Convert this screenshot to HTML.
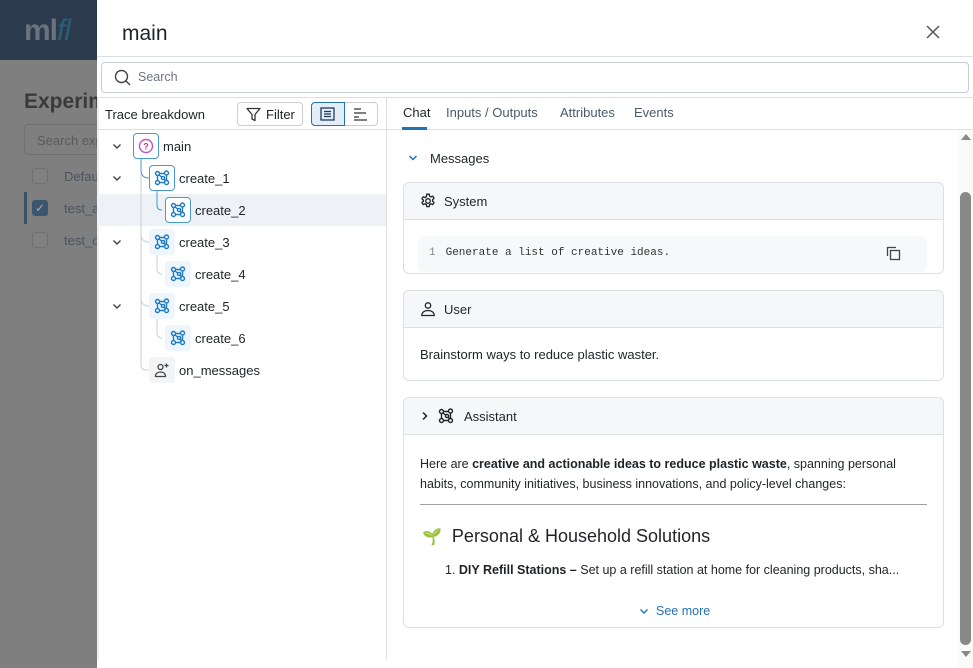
<!DOCTYPE html>
<html><head><meta charset="utf-8"><style>
*{box-sizing:border-box;margin:0;padding:0}
body{width:973px;height:668px;overflow:hidden;font-family:"Liberation Sans","DejaVu Sans",sans-serif;background:#7f7f7f;position:relative;color:#1f2328}
.a{position:absolute}
.bg-hdr{left:0;top:0;width:97px;height:60px;background:#2c3a4d}
.drawer{left:97px;top:0;width:876px;height:668px;background:#fff}
.t{font-size:13px;color:#1f2328;white-space:nowrap}
.ic{position:absolute;width:26px;height:26px;border-radius:4px;display:flex;align-items:center;justify-content:center;background:#eef5fb}
.ic.b{border:1px solid #4a98d2;background:#fff}
.card{position:absolute;left:403px;width:541px;border:1px solid #dcdfe3;border-radius:6px;overflow:hidden;background:#fff}
.ch{height:37px;background:#f6f7f9;border-bottom:1px solid #dcdfe3;display:flex;align-items:center;padding-left:16px;font-size:13px;gap:8px}
.cv{position:absolute}
</style></head><body>
<div class="a bg-hdr"></div>
<div class="a" style="left:24px;top:14px;font-size:30px;font-weight:bold;color:#6a727c;letter-spacing:-1px">ml<span style="color:#2b5e74;font-style:italic;font-weight:normal">fl</span></div>
<div class="a" style="left:24px;top:90px;font-size:21px;color:#3a3a3a;font-weight:bold">Experim</div>
<div class="a" style="left:24px;top:124px;width:90px;height:31px;border:1px solid #707070;border-radius:4px;font-size:13px;color:#5a5a5a;padding:8px 12px;white-space:nowrap;overflow:hidden">Search exp</div>
<div class="a" style="left:32px;top:168px;width:16px;height:16px;border:1px solid #707070;border-radius:3px"></div>
<div class="a" style="left:64px;top:169px;font-size:13px;color:#4a5560">Defau</div>
<div class="a" style="left:24px;top:192px;width:3px;height:32px;background:#3c526b"></div>
<div class="a" style="left:32px;top:200px;width:16px;height:16px;background:#3d5670;border-radius:3px;color:#aaa;font-size:12px;text-align:center;line-height:16px">✓</div>
<div class="a" style="left:64px;top:201px;font-size:13px;color:#4a5560">test_a</div>
<div class="a" style="left:32px;top:232px;width:16px;height:16px;border:1px solid #707070;border-radius:3px"></div>
<div class="a" style="left:64px;top:233px;font-size:13px;color:#4a5560">test_o</div>

<div class="a drawer"></div>
<div class="a" style="left:122px;top:22px;font-size:21px;color:#1f2328">main</div>
<svg class="a" style="left:926px;top:25px" width="14" height="14" viewBox="0 0 14 14"><path d="M1 1L13 13M13 1L1 13" stroke="#555" stroke-width="1.5"/></svg>
<div class="a" style="left:97px;top:56px;width:876px;height:1px;background:#dcdfe3"></div>
<div class="a" style="left:101px;top:62px;width:868px;height:31px;border:1px solid #c9ced4;border-radius:4px"></div>
<svg class="a" style="left:114px;top:69px" width="17" height="17" viewBox="0 0 17 17"><circle cx="7.5" cy="7.5" r="6" fill="none" stroke="#444" stroke-width="1.4"/><path d="M12 12l4 4" stroke="#444" stroke-width="1.4"/></svg>
<div class="a t" style="left:138px;top:70px;color:#6b7580;font-size:12.5px">Search</div>
<div class="a" style="left:97px;top:97px;width:876px;height:1px;background:#dcdfe3"></div>
<div class="a" style="left:97px;top:97px;width:2px;height:563px;background:#eee"></div>
<div class="a" style="left:386px;top:97px;width:1px;height:563px;background:#dcdfe3"></div>

<div class="a t" style="left:105px;top:107px">Trace breakdown</div>
<div class="a" style="left:237px;top:102px;width:66px;height:24px;border:1px solid #c9ced4;border-radius:4px"></div>
<svg class="a" style="left:246px;top:107px" width="15" height="15" viewBox="0 0 15 15"><path d="M1 1.5h13L9 7.5v6l-3-1.5V7.5z" fill="none" stroke="#333" stroke-width="1.3" stroke-linejoin="round"/></svg>
<div class="a t" style="left:266px;top:107px">Filter</div>
<div class="a" style="left:311px;top:102px;width:67px;height:24px;border:1px solid #c9ced4;border-radius:4px"></div>
<div class="a" style="left:311px;top:102px;width:34px;height:24px;border:1px solid #2272b4;background:#e3eef8;border-radius:4px 0 0 4px"></div>
<svg class="a" style="left:320px;top:107px" width="15" height="14" viewBox="0 0 15 14"><rect x="1" y="1" width="13" height="12" fill="none" stroke="#1f3b57" stroke-width="1.3"/><path d="M4 4.5h7M4 7h7M4 9.5h7" stroke="#1f3b57" stroke-width="1.2"/></svg>
<svg class="a" style="left:353px;top:107px" width="15" height="14" viewBox="0 0 15 14"><path d="M1 2h7M1 6h12M1 10h5M1 13h13" stroke="#333" stroke-width="1.3"/></svg>
<div class="a" style="left:97px;top:129px;width:289px;height:1px;background:#dcdfe3"></div>
<div class="a" style="left:97px;top:194px;width:289px;height:32px;background:#eef2f7"></div>

<svg class="a" style="left:97px;top:130px" width="289" height="260" viewBox="97 130 289 260" fill="none" stroke="#c9ced4" stroke-width="1">
<path d="M141 159V365q0 5 5 5h4"/>
<path d="M141 170q0 8 8 8"/>
<path d="M157 190v15q0 5 5 5"/>
<path d="M141 234q0 8 8 8"/>
<path d="M157 254v15q0 5 5 5"/>
<path d="M141 298q0 8 8 8"/>
<path d="M157 318v15q0 5 5 5"/>
</svg>
<svg class="a" style="left:97px;top:130px" width="100" height="100" viewBox="97 130 100 100" fill="none" stroke="#4a98d2" stroke-width="1">
<path d="M141 159v11q0 8 8 8"/><path d="M157 191v14q0 5 5 5"/>
</svg>

<svg class="cv" style="left:112px;top:143px" width="10" height="7" viewBox="0 0 10 7"><path d="M1.5 1.5L5 5l3.5-3.5" stroke="#444" stroke-width="1.4" fill="none"/></svg>
<svg class="cv" style="left:112px;top:175px" width="10" height="7" viewBox="0 0 10 7"><path d="M1.5 1.5L5 5l3.5-3.5" stroke="#444" stroke-width="1.4" fill="none"/></svg>
<svg class="cv" style="left:112px;top:239px" width="10" height="7" viewBox="0 0 10 7"><path d="M1.5 1.5L5 5l3.5-3.5" stroke="#444" stroke-width="1.4" fill="none"/></svg>
<svg class="cv" style="left:112px;top:303px" width="10" height="7" viewBox="0 0 10 7"><path d="M1.5 1.5L5 5l3.5-3.5" stroke="#444" stroke-width="1.4" fill="none"/></svg>

<div class="ic b" style="left:133px;top:133px"><svg width="16" height="16" viewBox="0 0 16 16"><circle cx="8" cy="8" r="6.5" fill="none" stroke="#c354c8" stroke-width="1.4"/><text x="8" y="11.5" font-size="9" text-anchor="middle" fill="#c03c7a" font-family="Liberation Sans" font-weight="bold">?</text></svg></div>
<div class="a t" style="left:163px;top:139px">main</div>

<svg width="0" height="0" style="position:absolute"><defs><g id="n" fill="none" stroke-width="1.4"><circle cx="3.5" cy="3.5" r="2"/><circle cx="12.5" cy="3" r="2"/><circle cx="3.5" cy="12.5" r="2"/><circle cx="12.5" cy="12.5" r="2"/><circle cx="9" cy="8" r="1.6"/><path d="M5.5 3.5h5M3.5 5.5v5M5.5 12.5h5M12.5 5v5.5M5 5l2.7 2M10.3 9l1 2"/></g></defs></svg>
<div class="ic b" style="left:149px;top:165px"><svg width="16" height="16" stroke="#1e7ac0"><use href="#n"/></svg></div>
<div class="a t" style="left:179px;top:171px">create_1</div>
<div class="ic b" style="left:165px;top:197px"><svg width="16" height="16" stroke="#1e7ac0"><use href="#n"/></svg></div>
<div class="a t" style="left:195px;top:203px">create_2</div>
<div class="ic" style="left:149px;top:229px"><svg width="16" height="16" stroke="#1e7ac0"><use href="#n"/></svg></div>
<div class="a t" style="left:179px;top:235px">create_3</div>
<div class="ic" style="left:165px;top:261px"><svg width="16" height="16" stroke="#1e7ac0"><use href="#n"/></svg></div>
<div class="a t" style="left:195px;top:267px">create_4</div>
<div class="ic" style="left:149px;top:293px"><svg width="16" height="16" stroke="#1e7ac0"><use href="#n"/></svg></div>
<div class="a t" style="left:179px;top:299px">create_5</div>
<div class="ic" style="left:165px;top:325px"><svg width="16" height="16" stroke="#1e7ac0"><use href="#n"/></svg></div>
<div class="a t" style="left:195px;top:331px">create_6</div>
<div class="ic" style="left:149px;top:357px;background:#f3f4f6"><svg width="16" height="16" viewBox="0 0 16 16" fill="none" stroke="#444" stroke-width="1.3"><circle cx="6.5" cy="5" r="2.5"/><path d="M1.5 14.5c0-3 2.2-4.5 5-4.5s5 1.5 5 4.5z"/><path d="M12.5 1.5v4M10.5 3.5h4"/></svg></div>
<div class="a t" style="left:179px;top:363px">on_messages</div>

<div class="a t" style="left:403px;top:105px">Chat</div>
<div class="a t" style="left:446px;top:105px;color:#4a5a6a">Inputs / Outputs</div>
<div class="a t" style="left:560px;top:105px;color:#4a5a6a">Attributes</div>
<div class="a t" style="left:634px;top:105px;color:#4a5a6a">Events</div>
<div class="a" style="left:387px;top:129px;width:586px;height:1px;background:#dcdfe3"></div>
<div class="a" style="left:402px;top:127px;width:25px;height:3px;background:#2272b4"></div>

<div class="a" style="left:958px;top:130px;width:15px;height:538px;background:#fafafa"></div>
<div class="a" style="left:961px;top:134px;width:0;height:0;border-left:5px solid transparent;border-right:5px solid transparent;border-bottom:6px solid #888"></div>
<div class="a" style="left:960px;top:192px;width:11px;height:453px;background:#888;border-radius:6px"></div>
<div class="a" style="left:961px;top:651px;width:0;height:0;border-left:5px solid transparent;border-right:5px solid transparent;border-top:6px solid #888"></div>

<svg class="a" style="left:408px;top:154px" width="10" height="8" viewBox="0 0 10 8"><path d="M1.5 2l3.5 3.5L8.5 2" stroke="#2272b4" stroke-width="1.5" fill="none"/></svg>
<div class="a t" style="left:430px;top:151px">Messages</div>

<div class="card" style="top:182px;height:92px">
<div class="ch"><svg width="16" height="16" viewBox="0 0 16 16" fill="none" stroke="#222" stroke-width="1.3"><circle cx="8" cy="8" r="2.3"/><path d="M6.8 1.2h2.4l.4 1.9 1.4.8 1.8-.7 1.2 2.1-1.4 1.3v1.6l1.4 1.3-1.2 2.1-1.8-.7-1.4.8-.4 1.9H6.8l-.4-1.9-1.4-.8-1.8.7-1.2-2.1 1.4-1.3V7.2L2 5.9l1.2-2.1 1.8.7 1.4-.8z"/></svg><span>System</span></div>
<div class="a" style="left:14px;top:53px;width:509px;height:36px;background:#f7f8f9;border-radius:6px"></div>
<div class="a" style="left:25px;top:64px;font-family:'Liberation Mono',monospace;font-size:11px;color:#333;white-space:nowrap"><span style="color:#888;margin-right:10px">1</span>Generate a list of creative ideas.</div>
<svg class="a" style="left:482px;top:63px" width="15" height="15" viewBox="0 0 15 15" fill="none" stroke="#444" stroke-width="1.3"><path d="M1.5 10V1.5H10"/><rect x="4.5" y="4.5" width="9" height="9"/></svg>
</div>

<div class="card" style="top:290px;height:91px">
<div class="ch"><svg width="16" height="16" viewBox="0 0 16 16" fill="none" stroke="#222" stroke-width="1.3"><circle cx="8" cy="4.5" r="2.7"/><path d="M1.8 14.5c0-3.3 2.8-5 6.2-5s6.2 1.7 6.2 5z"/></svg><span>User</span></div>
<div class="a t" style="left:16px;top:56px">Brainstorm ways to reduce plastic waster.</div>
</div>

<div class="card" style="top:397px;height:231px">
<div class="ch"><svg width="10" height="10" viewBox="0 0 10 10"><path d="M3 1.5L6.5 5 3 8.5" stroke="#222" stroke-width="1.5" fill="none"/></svg><svg width="16" height="16" stroke="#222"><use href="#n"/></svg><span style="margin-left:2px">Assistant</span></div>
<div class="a" style="left:16px;top:56px;width:500px;font-size:12.5px;line-height:20px;color:#1f2328">Here are <span style="font-weight:600">creative and actionable ideas to reduce plastic waste</span>, spanning personal habits, community initiatives, business innovations, and policy-level changes:</div>
<div class="a" style="left:16px;top:106px;width:507px;height:1px;background:#9aa0a6"></div>
<div class="a" style="left:18px;top:128px;font-size:18px;color:#1f2328;white-space:nowrap"><span style="color:#5a9e3a;font-size:16px">🌱</span>&nbsp; Personal &amp; Household Solutions</div>
<div class="a" style="left:41px;top:165px;font-size:12.5px;white-space:nowrap">1. <b>DIY Refill Stations –</b> Set up a refill station at home for cleaning products, sha...</div>
<svg class="a" style="left:235px;top:210px" width="10" height="7" viewBox="0 0 10 7"><path d="M1.5 1.5L5 5l3.5-3.5" stroke="#2272b4" stroke-width="1.4" fill="none"/></svg>
<div class="a" style="left:252px;top:206px;font-size:12.5px;color:#2272b4;white-space:nowrap">See more</div>
</div>
</body></html>
